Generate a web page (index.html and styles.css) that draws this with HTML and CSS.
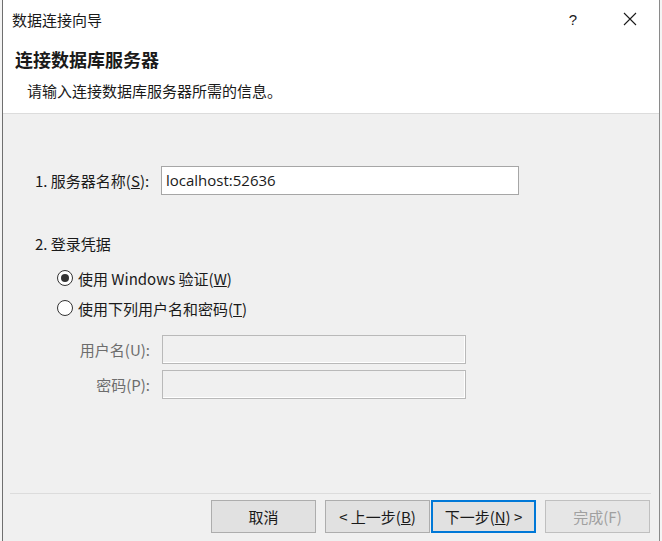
FILE: index.html
```html
<!DOCTYPE html>
<html lang="zh-CN">

<head>
   <meta charset="UTF-8">
   <meta name="viewport" content="width=device-width, initial-scale=1.0">
   <title>数据连接向导</title>
   <link rel="stylesheet" href="styles.css">
</head>

<body>
   <div class="window">
      <div class="top">
         <div class="title-bar">
            <span class="title">数据连接向导</span>
            <span class="help">?</span>
            <span class="close">
               <svg width="14" height="14" viewBox="0 0 14 14">
                  <path d="M1 1 L13 13 M13 1 L1 13" stroke="#1a1a1a" stroke-width="1.1" fill="none" />
               </svg>
            </span>
         </div>
         <div class="header">
            <h1>连接数据库服务器</h1>
            <p class="sub">请输入连接数据库服务器所需的信息。</p>
         </div>
      </div>

      <div class="content">
         <div class="server-row">
            <label>1. 服务器名称(<u>S</u>):</label>
            <div class="input">localhost:52636</div>
         </div>

         <p class="section">2. 登录凭据</p>

         <div class="radio-row">
            <span class="radio checked"></span>
            <span>使用 Windows 验证(<u>W</u>)</span>
         </div>
         <div class="radio-row">
            <span class="radio"></span>
            <span>使用下列用户名和密码(<u>T</u>)</span>
         </div>

         <div class="cred-row first">
            <label>用户名(U):</label>
            <div class="input disabled"></div>
         </div>
         <div class="cred-row">
            <label>密码(P):</label>
            <div class="input disabled"></div>
         </div>
      </div>

      <div class="footer">
         <button class="btn">取消</button>
         <div class="pair">
            <button class="btn">&lt; 上一步(<u>B</u>)</button>
            <button class="btn default">下一步(<u>N</u>) &gt;</button>
         </div>
         <button class="btn off">完成(F)</button>
      </div>
   </div>
</body>

</html>
```

FILE: styles.css
```css
* {
   margin: 0;
   padding: 0;
   box-sizing: border-box;
   font-family: "Noto Sans CJK SC", "Noto Sans", sans-serif;
}

body {
   background-color: #f4f4f4;
   width: 662px;
   height: 541px;
   overflow: hidden;
}

.window {
   margin-left: 2px;
   width: 658px;
   height: 541px;
   border-left: 1px solid #6f6f6f;
   border-right: 1px solid #8a8a8a;
   background-color: #f0f0f0;
   display: flex;
   flex-direction: column;
   color: #1a1a1a;
   font-size: 15px;
}

.top {
   background-color: #fff;
   height: 114px;
   border-bottom: 1px solid #dcdcdc;
}

.title-bar {
   height: 38px;
   display: flex;
   align-items: center;
   padding-left: 9px;
   font-size: 15px;
}

.title {
   flex: 1;
}

.help {
   width: 20px;
   text-align: center;
   font-family: "Liberation Sans", sans-serif;
   font-size: 15px;
   margin-right: 40px;
}

.close {
   width: 14px;
   height: 14px;
   margin-right: 22px;
   display: flex;
}

.header {
   padding-left: 12px;
}

h1 {
   font-size: 18px;
   font-weight: bold;
   line-height: 24px;
   margin-top: 9px;
}

.sub {
   font-size: 15px;
   line-height: 20px;
   margin-top: 10px;
   padding-left: 12px;
}

.content {
   flex: 1;
   padding-left: 32px;
}

.server-row {
   display: flex;
   align-items: center;
   margin-top: 52px;
}

.server-row label {
   width: 126px;
}

.input {
   height: 29px;
   width: 358px;
   border: 1px solid #a6a6a6;
   background-color: #fff;
   padding-left: 4px;
   font-family: "Open Sans", "Noto Sans", sans-serif;
   font-size: 15px;
   line-height: 27px;
}

.section {
   margin-top: 38px;
   line-height: 22px;
}

.radio-row {
   display: flex;
   align-items: center;
   gap: 5px;
   padding-left: 22px;
   height: 30px;
}

.section + .radio-row {
   margin-top: 8px;
}

.radio {
   width: 16px;
   height: 16px;
   border: 1px solid #333;
   border-radius: 50%;
   background-color: #fff;
   display: flex;
   align-items: center;
   justify-content: center;
}

.radio.checked::after {
   content: "";
   width: 8px;
   height: 8px;
   border-radius: 50%;
   background-color: #333;
}

.cred-row {
   display: flex;
   align-items: center;
   margin-top: 6px;
}

.cred-row.first {
   margin-top: 12px;
}

.cred-row label {
   width: 127px;
   text-align: right;
   padding-right: 12px;
   color: #6d6d6d;
}

.input.disabled {
   width: 304px;
   background-color: #f0f0f0;
   border-color: #b9b9b9;
   box-shadow: inset -1px -1px 0 #fff;
}

.footer {
   margin: 0 8px 0 7px;
   border-top: 1px solid #dcdcdc;
   height: 48px;
   display: flex;
   justify-content: flex-end;
   gap: 9px;
   padding-top: 6px;
   padding-right: 1px;
}

.pair {
   display: flex;
   gap: 1px;
}

.btn {
   width: 105px;
   height: 33px;
   background-color: #e1e1e1;
   border: 1px solid #adadad;
   font-size: 15px;
   color: #1a1a1a;
}

.btn.default {
   border: 2px solid #0078d7;
   background-color: #e1e1e1;
}

.btn.off {
   color: #a0a0a0;
   background-color: #e6e6e6;
   border-color: #bfbfbf;
}
```
